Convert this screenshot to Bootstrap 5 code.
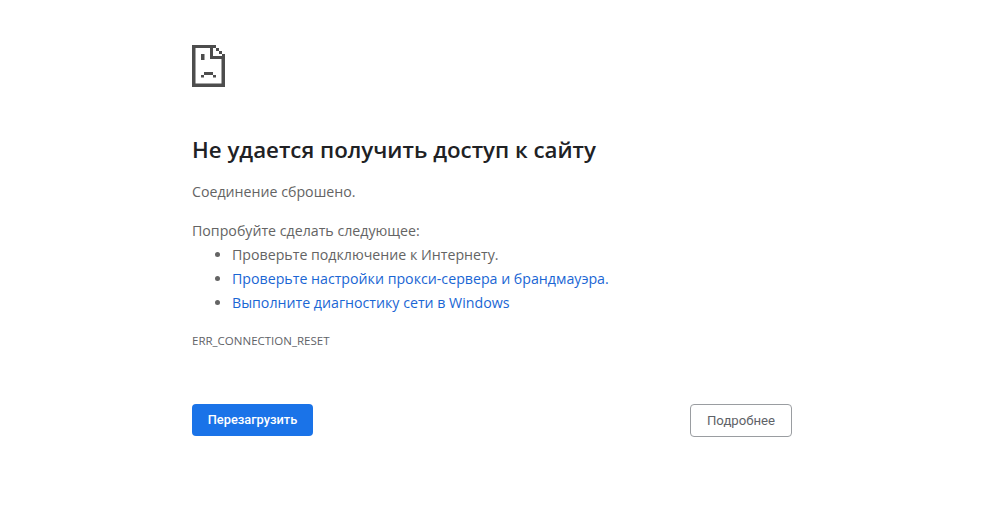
<!DOCTYPE html>
<html lang="ru">
<head>
<meta charset="utf-8">
<title>Ошибка</title>
<link href="https://cdn.jsdelivr.net/npm/bootstrap@5.3.0/dist/css/bootstrap.min.css" rel="stylesheet">
<style>
html,body{height:100%;background:#fff}
body{font-family:"Open Sans","Noto Sans",sans-serif;font-size:14.2px;color:#646464;overflow:hidden}
.err-wrap{width:600px;margin-left:192px;padding-top:45px}
.err-icon{display:block;width:33px;height:42px}
.err-title{font-size:22.3px;font-weight:600;color:#202124;line-height:30px;margin:48px 0 0}
.err-sub{line-height:20px;margin:17px 0 0}
.err-try{line-height:20px;margin:19px 0 0}
.err-list{margin:2px 0 0;padding-left:40px;line-height:24px}
.err-list li::marker{color:#646464}
.err-list a{color:#1a66d4;text-decoration:none}
.err-code{font-size:11.5px;line-height:16px;margin:18px 0 0;color:#5f6368}
.err-actions{margin-top:55px}
.btn.err-reload{background:#1a73e8;border:0;color:#fff;font-family:Roboto,sans-serif;font-size:12.8px;font-weight:500;width:121px;height:32px;padding:0;border-radius:4px}
.btn.err-more{background:#fff;border:1px solid #9a9da1;color:#5f6368;font-family:Roboto,sans-serif;font-size:13.2px;width:102px;height:33px;padding:0;border-radius:4px}
</style>
</head>
<body>
<main class="err-wrap">
<svg class="err-icon" viewBox="0 0 33 42" fill="#4d4d4d" aria-hidden="true">
<path d="M0 0H21V3H3.5V38.5H29.5V14H33V42H0Z"/>
<path d="M18 0H21V11H33V14H18Z"/>
<path d="M21 0H24V3H27V6H30V9H33V14H30V9H27V6H24V3H21Z"/>
<rect x="9" y="9" width="3.5" height="6"/>
<path d="M9 30H12V27H21V30H24V32.5H21V30H12V32.5H9Z"/>
</svg>
<h1 class="err-title">Не удается получить доступ к сайту</h1>
<p class="err-sub">Соединение сброшено.</p>
<p class="err-try mb-0">Попробуйте сделать следующее:</p>
<ul class="err-list">
<li>Проверьте подключение к Интернету.</li>
<li><a href="#">Проверьте настройки прокси-сервера и брандмауэра.</a></li>
<li><a href="#">Выполните диагностику сети в Windows</a></li>
</ul>
<div class="err-code">ERR_CONNECTION_RESET</div>
<div class="err-actions d-flex justify-content-between align-items-start">
<button type="button" class="btn err-reload">Перезагрузить</button>
<button type="button" class="btn err-more">Подробнее</button>
</div>
</main>
<script src="https://cdn.jsdelivr.net/npm/bootstrap@5.3.0/dist/js/bootstrap.bundle.min.js"></script>
</body>
</html>
